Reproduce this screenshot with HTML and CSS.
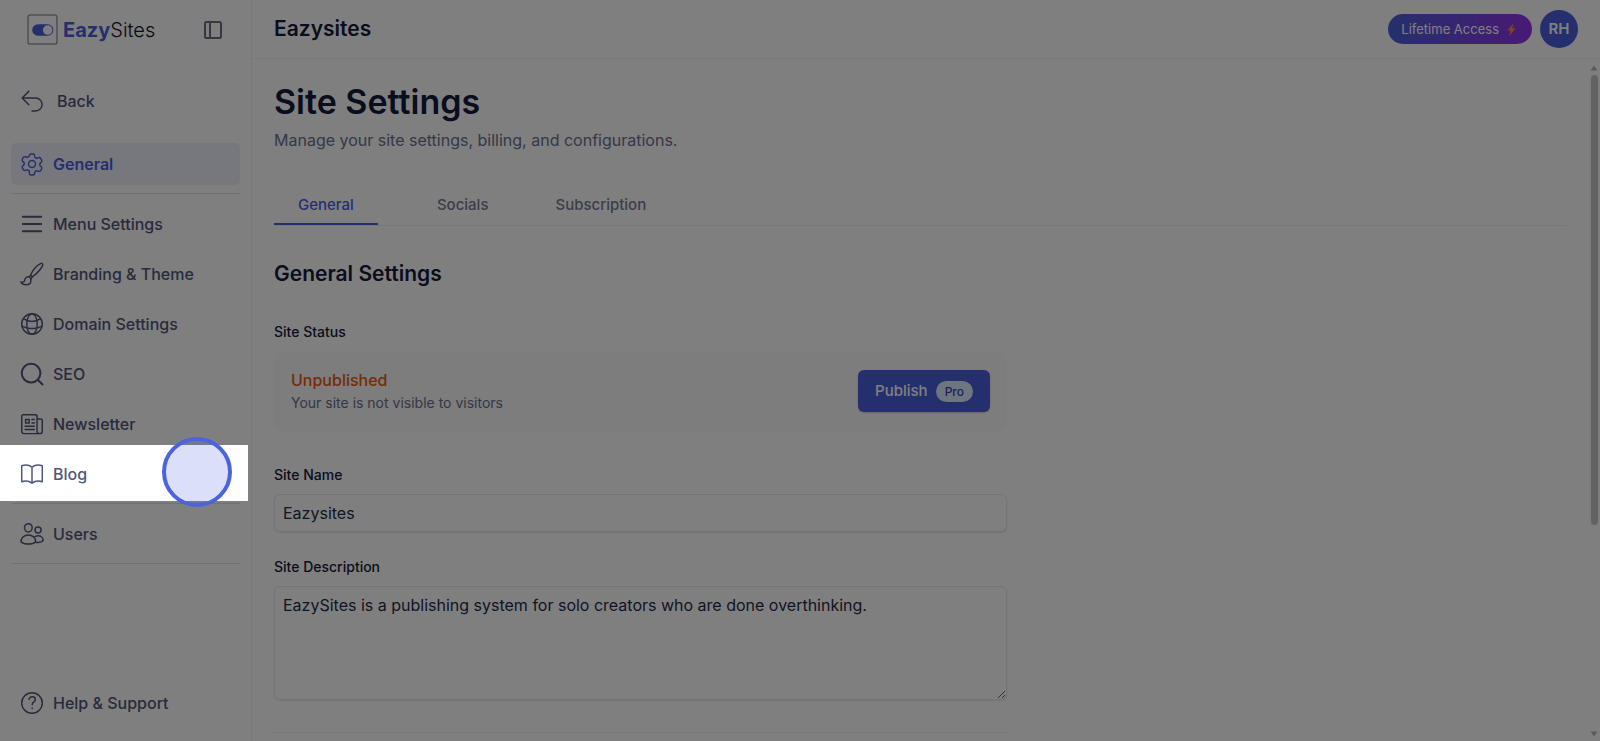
FILE: index.html
```html
<!DOCTYPE html>
<html lang="en">
<head>
<meta charset="utf-8">
<meta name="viewport" content="width=device-width, initial-scale=1">
<title>Eazysites – Site Settings</title>
<link rel="stylesheet" href="styles.css">
</head>
<body>
<div class="app">
  <aside class="sidebar">
    <div class="brand-row">
      <a class="brand" href="#">
        <svg class="brand-mark" viewBox="0 0 30 30" aria-hidden="true">
          <rect x="1" y="1" width="28" height="28" rx="2" fill="none" stroke="#777" stroke-width="1"/>
          <rect x="5" y="10" width="20.500" height="11" rx="5.500" fill="#4b5fdc"/>
          <circle cx="20" cy="15.500" r="4.600" fill="#fff"/>
        </svg>
        <span class="brand-name"><b>Eazy</b>Sites</span>
      </a>
      <button class="icon-button" type="button" aria-label="Toggle sidebar">
        <svg viewBox="0 0 20 20" class="panel-icon" aria-hidden="true"><rect x="2" y="2" width="16" height="16" rx="1.500"/><path d="M7 2v16"/></svg>
      </button>
    </div>

    <a class="nav-item nav-back" href="#">
      <svg class="icon" viewBox="0 0 24 24" aria-hidden="true"><path d="M8.500 1.500 1.200 8.800l7.300 7.300M1.200 8.800h14.800a7 7 0 0 1 0 14H12"/></svg>
      <span>Back</span>
    </a>

    <nav class="nav" aria-label="Site">
      <a class="nav-item is-active" href="#" aria-current="page">
        <svg class="icon" viewBox="0 0 24 24" aria-hidden="true"><path d="M9.200 2.600c.1-.9.800-1.600 1.700-1.600h2.200c.9 0 1.600.7 1.700 1.600l.2 1.400c.1.500.4.900.9 1.100l.6.400c.5.300 1 .3 1.500.1l1.200-.5c.8-.3 1.700 0 2.200.8l1.100 1.900c.4.800.3 1.700-.4 2.300l-1 .8c-.4.300-.6.800-.6 1.300v.7c0 .5.200 1 .6 1.300l1 .8c.7.600.8 1.500.4 2.300l-1.100 1.900c-.5.700-1.400 1.100-2.200.8l-1.200-.5c-.5-.2-1-.1-1.500.1l-.6.400c-.5.200-.8.600-.9 1.100l-.2 1.400c-.1.900-.8 1.500-1.700 1.500h-2.200c-.9 0-1.600-.6-1.700-1.500L9 20.100c-.1-.5-.4-.9-.9-1.100l-.6-.4c-.5-.2-1-.3-1.500-.1l-1.200.5c-.8.300-1.700-.1-2.200-.8l-1.100-1.900c-.4-.8-.3-1.700.4-2.300l1-.8c.4-.3.600-.8.600-1.300v-.7c0-.5-.2-1-.6-1.300l-1-.8c-.7-.6-.8-1.500-.4-2.300l1.100-1.900c.5-.8 1.400-1.100 2.200-.8l1.200.5c.5.200 1 .2 1.500-.1l.6-.4c.5-.2.800-.6.900-1.100z"/><circle cx="12" cy="12" r="3.800"/></svg>
        <span>General</span>
      </a>
      <hr class="nav-rule">
      <a class="nav-item" href="#">
        <svg class="icon icon-bold" viewBox="0 0 24 24" aria-hidden="true"><path d="M2 4h20M2 12h20M2 20h20"/></svg>
        <span>Menu Settings</span>
      </a>
      <a class="nav-item" href="#">
        <svg class="icon" viewBox="0 0 24 24" aria-hidden="true"><path d="M10.400 13.300C12.500 8.500 17 2.800 21.300.6c1.500-.8 3 .7 2.300 2.200-2.200 4.300-6.500 8.900-11.400 12.400M10.400 13.300a5 5 0 0 1 1.800 1.900M10.400 13.300 9 15M12.200 15.200 10.800 18M9 15a4.300 4.300 0 0 0-5 3.900c0 1.600-1.500 2.300-4.200 1.800 1 2.100 3.400 3.100 5.800 3.100 3.200 0 5.200-1.900 5.200-4.400 0-2-.6-3.600-1.800-4.400z"/></svg>
        <span>Branding &amp; Theme</span>
      </a>
      <a class="nav-item" href="#">
        <svg class="icon" viewBox="0 0 24 24" aria-hidden="true"><circle cx="12" cy="12" r="11.200"/><ellipse cx="12" cy="12" rx="5.700" ry="11.200"/><path d="M3 6.500Q12 12 21 6.500M1.500 14.500q10.500 5 21 0"/></svg>
        <span>Domain Settings</span>
      </a>
      <a class="nav-item" href="#">
        <svg class="icon icon-bold" viewBox="0 0 24 24" aria-hidden="true"><circle cx="11" cy="11" r="10.200"/><path d="m18.500 18.500 5 5"/></svg>
        <span>SEO</span>
      </a>
      <a class="nav-item" href="#">
        <svg class="icon" viewBox="0 0 24 24" aria-hidden="true"><path d="M17.500 20V3.500A1.700 1.700 0 0 0 15.800 1.800H2.500A1.700 1.700 0 0 0 .8 3.500V20a2.500 2.500 0 0 0 2.500 2.500h17.200A2.700 2.700 0 0 0 23.200 19.800V8a1.500 1.500 0 0 0-1.500-1.500h-4.200M20.300 22.500a2.700 2.700 0 0 1-2.800-2.500M5 7h4v4H5zM12 7h2.500M12 11h2.500M4.500 14.500h10M4.500 18h10"/></svg>
        <span>Newsletter</span>
      </a>
      <a class="nav-item tour-target" href="#">
        <svg class="icon" viewBox="0 0 24 24" aria-hidden="true"><path d="M12 4.500C9.500 2.500 5 1.700.8 3v17.500c4.200-1.300 8.700-.5 11.200 1.500 2.500-2 7-2.800 11.200-1.500V3C19 1.700 14.500 2.500 12 4.500zM12 4.500V22"/></svg>
        <span>Blog</span>
        <i class="tour-spotlight" aria-hidden="true"></i>
        <i class="tour-pointer" aria-hidden="true"></i>
      </a>
      <hr class="nav-rule">
      <a class="nav-item" href="#">
        <svg class="icon" viewBox="0 0 24 24" aria-hidden="true"><ellipse cx="8" cy="5.200" rx="4.200" ry="4.500"/><circle cx="18.600" cy="7.600" r="3.300"/><path d="M8 13c-4.200 0-8 3-8 7.400C2 22.300 5 23 8 23s6-.7 8-2.600C16 16 12.200 13 8 13zM14.300 15.800c1.200-1.300 2.700-1.800 4.300-1.800 3 0 5.600 2 5.600 5.200-1.500 1.700-5 2.400-8.300 1.700"/></svg>
        <span>Users</span>
      </a>
      <hr class="nav-rule">
    </nav>

    <a class="nav-item nav-help" href="#">
      <svg class="icon" viewBox="0 0 24 24" aria-hidden="true"><circle cx="12" cy="12" r="11.200"/><path d="M8.800 8.200c0-1.900 1.500-3 3.400-3s3.500 1.200 3.500 3c0 2.600-3.500 2.600-3.500 5.600M12.200 17.500v.6"/></svg>
      <span>Help &amp; Support</span>
    </a>
  </aside>

  <div class="page">
    <header class="topbar">
      <div class="site-name">Eazysites</div>
      <div class="account">
        <button class="plan" type="button">Lifetime Access
          <svg class="bolt" viewBox="0 0 10 14" aria-hidden="true"><path d="M7 0 .5 8h3.400l-1.200 6L9.500 5.500H5.800z" fill="#ff8a3c"/></svg>
        </button>
        <button class="avatar" type="button" aria-label="Account RH">RH</button>
      </div>
    </header>

    <div class="body-row">
      <main class="content">
        <h1>Site Settings</h1>
        <p class="lead">Manage your site settings, billing, and configurations.</p>

        <div class="tabs" role="tablist">
          <button class="tab is-selected" type="button" role="tab" aria-selected="true">General</button>
          <button class="tab" type="button" role="tab" aria-selected="false">Socials</button>
          <button class="tab" type="button" role="tab" aria-selected="false">Subscription</button>
        </div>

        <form class="settings">
          <h2>General Settings</h2>
          <div class="label" id="status-label">Site Status</div>
          <section class="status-card" aria-labelledby="status-label">
            <div>
              <div class="status">Unpublished</div>
              <div class="status-note">Your site is not visible to visitors</div>
            </div>
            <button class="publish" type="button">Publish <span class="pro">Pro</span></button>
          </section>

          <label class="label" for="site-name">Site Name</label>
          <input class="field" id="site-name" type="text" value="Eazysites">

          <label class="label" for="site-description">Site Description</label>
          <textarea class="field field-area" id="site-description">EazySites is a publishing system for solo creators who are done overthinking.</textarea>
          <hr class="section-rule">
        </form>
      </main>
      <div class="scroll-track" aria-hidden="true">
        <svg class="scroll-arrow" viewBox="0 0 8 6"><path d="M4 .5 7.500 5.500h-7z"/></svg>
        <div class="scroll-thumb"></div>
        <svg class="scroll-arrow scroll-down" viewBox="0 0 8 6"><path d="M4 5.500 7.500.5h-7z"/></svg>
      </div>
    </div>
  </div>
</div>
</body>
</html>
```
FILE: styles.css
```css
:root {
  --blue: #4b5fdc;
  --ink: #141a3a;
  --slate: #50567a;
  --muted: #6b7090;
  --line: #f0f0f3;
}

* { box-sizing: border-box; }

body {
  margin: 0;
  background: #fff;
  color: var(--ink);
  font: 16px/24px Inter, "Liberation Sans", sans-serif;
}

button { font: inherit; border: 0; padding: 0; background: none; cursor: pointer; }
a { color: inherit; text-decoration: none; }
hr { border: 0; margin: 0; height: 1px; }

.app { display: flex; height: 100vh; overflow: hidden; }

/* Sidebar */
.sidebar {
  flex: none;
  display: flex;
  flex-direction: column;
  width: 252px;
  padding: 0 11px 17px;
  border-right: 1px solid var(--line);
}
.brand-row {
  display: flex;
  align-items: center;
  justify-content: space-between;
  height: 59px;
  padding: 0 17px 0 16px;
}
.brand { display: flex; align-items: center; gap: 5px; }
.brand-mark { width: 31px; height: 31px; }
.brand-name { font-size: 20px; font-weight: 300; color: #101426; }
.brand-name b { font-weight: 700; color: var(--blue); }
.icon-button { display: flex; color: #6b6f84; }
.panel-icon { width: 20px; height: 20px; fill: none; stroke: currentColor; stroke-width: 2; }

.nav { display: flex; flex-direction: column; gap: 8px; }
.nav-item {
  display: flex;
  align-items: center;
  gap: 10px;
  height: 42px;
  padding: 0 10px;
  border-radius: 5px;
  color: var(--slate);
  font-weight: 500;
}
.nav-back { gap: 14px; margin: 21px 0; }
.nav-help { margin-top: auto; }
.is-active { background: #eef0fd; color: var(--blue); font-weight: 600; }
.nav-rule { background: #e0e2ee; margin: 0 0 1px; }
.icon {
  flex: none;
  width: 22px;
  height: 22px;
  overflow: visible;
  fill: none;
  stroke: currentColor;
  stroke-width: 1.6;
  stroke-linecap: round;
  stroke-linejoin: round;
}
.icon-bold { stroke-width: 2.2; }

/* Guided tour: dims everything outside the highlighted item */
.tour-target { position: relative; }
.tour-spotlight {
  position: absolute;
  z-index: 10;
  inset: -8px -8px -6px -11px;
  box-shadow: 0 0 0 200vmax rgba(0, 0, 0, .5);
  pointer-events: none;
}
.tour-pointer {
  position: absolute;
  z-index: 11;
  top: -16px;
  right: 8px;
  width: 70px;
  height: 70px;
  border: 4px solid #4b64de;
  border-radius: 50%;
  background: rgba(75, 98, 222, .2);
  pointer-events: none;
}

/* Top bar */
.page { flex: 1; min-width: 0; display: flex; flex-direction: column; }
.topbar {
  flex: none;
  display: flex;
  align-items: center;
  justify-content: space-between;
  height: 59px;
  padding: 0 22px;
  border-bottom: 1px solid var(--line);
}
.site-name { font-size: 21px; font-weight: 600; }
.account { display: flex; align-items: center; gap: 8px; }
.plan {
  display: flex;
  align-items: center;
  gap: 8px;
  height: 30px;
  padding: 0 16px 0 13px;
  border-radius: 15px;
  background: linear-gradient(90deg, #4b5fdc, #9333ea);
  color: #fff;
  font-size: 13px;
  font-weight: 400;
}
.bolt { width: 9px; height: 13px; }
.avatar {
  width: 38px;
  height: 38px;
  border-radius: 50%;
  background: var(--blue);
  color: #fff;
  font-size: 15px;
  font-weight: 600;
}

/* Content */
.body-row { flex: 1; min-height: 0; display: flex; }
.content { flex: 1; min-width: 0; padding: 22px 23px 0 22px; overflow: hidden; }
h1 { margin: 0; font-size: 34px; line-height: 42px; font-weight: 600; }
.lead { margin: 5px 0 0; color: var(--muted); }

.tabs { display: flex; gap: 17px; margin-top: 32px; border-bottom: 1px solid var(--line); }
.tab {
  height: 41px;
  padding: 2px 25px 0;
  border-bottom: 2px solid transparent;
  color: #777b95;
  font-size: 15px;
  font-weight: 500;
}
.is-selected { margin-right: 17px; padding: 2px 24px 0; border-color: var(--blue); color: var(--blue); }

.settings { max-width: 733px; }
h2 { margin: 34px 0 33px; font-size: 21px; line-height: 28px; font-weight: 600; }
.label { display: block; margin-bottom: 8px; font-size: 14px; line-height: 22px; font-weight: 500; }
.status-card {
  display: flex;
  align-items: center;
  justify-content: space-between;
  height: 80px;
  margin-bottom: 33px;
  padding: 0 17px;
  border-radius: 8px;
  background: #fafafa;
}
.status { color: #ea580c; font-weight: 500; line-height: 24px; }
.status-note { color: var(--muted); font-size: 14px; line-height: 22px; }
.publish {
  display: flex;
  align-items: center;
  gap: 8px;
  height: 42px;
  padding: 0 17px;
  border-radius: 6px;
  background: var(--blue);
  box-shadow: 0 1px 2px rgba(0, 0, 0, .2);
  color: #fff;
  font-size: 15px;
  font-weight: 500;
}
.pro {
  padding: 0 9px;
  border-radius: 11px;
  background: #dbeafe;
  color: #3343b8;
  font-size: 12px;
  line-height: 21px;
}
.field {
  display: block;
  width: 100%;
  height: 38px;
  margin-bottom: 24px;
  padding: 6px 8px;
  border: 1px solid #e8e9f2;
  border-radius: 6px;
  background: #fff;
  box-shadow: 0 1px 2px rgba(0, 0, 0, .1);
  color: #252b4b;
  font: inherit;
}
.field-area { height: 114px; margin-bottom: 32px; resize: vertical; }
.section-rule { background: var(--line); }

/* Scroll indicator */
.scroll-track {
  flex: none;
  display: flex;
  flex-direction: column;
  align-items: center;
  gap: 4px;
  width: 10px;
  padding: 6px 2px 4px 0;
}
.scroll-arrow { flex: none; width: 8px; height: 6px; fill: #b4b4b4; }
.scroll-thumb { width: 7px; height: 67%; border-radius: 4px; background: #c4c4c4; }
.scroll-down { margin-top: auto; }
```
